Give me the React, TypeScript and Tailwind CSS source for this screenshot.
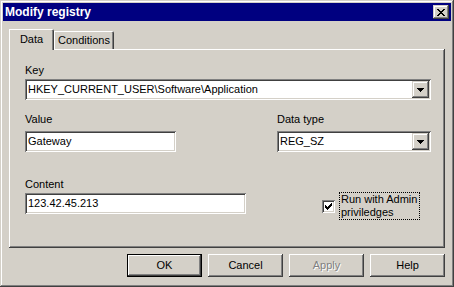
import React from "react"

const raised =
  "shadow-[inset_-1px_-1px_0_#404040,inset_1px_1px_0_#d4d0c8,inset_-2px_-2px_0_#808080,inset_2px_2px_0_#ffffff]"
const pushed =
  "shadow-[inset_-1px_-1px_0_#404040,inset_1px_1px_0_#ffffff,inset_-2px_-2px_0_#808080,inset_2px_2px_0_#d4d0c8]"
const sunken =
  "shadow-[inset_1px_1px_0_#808080,inset_-1px_-1px_0_#ffffff,inset_2px_2px_0_#404040,inset_-2px_-2px_0_#d4d0c8]"

function Pixels({ rows, w, h }: { rows: string[]; w: number; h: number }) {
  return (
    <svg width={w} height={h} viewBox={`0 0 ${w} ${h}`} shapeRendering="crispEdges">
      {rows.map((row, y) =>
        row.split("").map((c, x) => (c === "X" ? <rect key={`${x}-${y}`} x={x} y={y} width={1} height={1} fill="#000" /> : null))
      )}
    </svg>
  )
}

const closeGlyph = ["XX....XX", ".XX..XX.", "..XXXX..", "...XX...", "..XXXX..", ".XX..XX.", "XX....XX"]
const arrowGlyph = ["XXXXXXX", ".XXXXX.", "..XXX..", "...X..."]
const checkGlyph = ["......X", ".....XX", "X...XXX", "XX.XXX.", "XXXXX..", ".XXX...", "..X...."]

function DropButton() {
  return (
    <div className={`w-[17px] h-[17px] bg-[#d4d0c8] flex items-center justify-center ${raised}`}>
      <Pixels rows={arrowGlyph} w={7} h={4} />
    </div>
  )
}

function Combo({ value, width }: { value: string; width: string }) {
  return (
    <div className={`${width} h-[21px] bg-white flex items-center p-[2px] ${sunken}`}>
      <span className="flex-1 pl-[1px] leading-[13px]">{value}</span>
      <DropButton />
    </div>
  )
}

function Field({ value, width }: { value: string; width: string }) {
  return (
    <div className={`${width} h-[21px] bg-white flex items-center pl-[3px] ${sunken}`}>
      <span className="leading-[13px]">{value}</span>
    </div>
  )
}

function Button({ label, isDefault, disabled }: { label: string; isDefault?: boolean; disabled?: boolean }) {
  const inner = (
    <div
      className={`flex-1 h-full flex items-center justify-center bg-[#d4d0c8] ${pushed} ${
        disabled ? "text-[#808080] [text-shadow:1px_1px_0_#ffffff]" : "text-black"
      }`}
    >
      {label}
    </div>
  )
  return (
    <div className={`w-[75px] h-[23px] flex ${isDefault ? "border border-black" : ""}`}>{inner}</div>
  )
}

export default function App() {
  return (
    <div
      className={`w-[454px] h-[287px] bg-[#d4d0c8] p-[3px] flex flex-col text-[11px] text-black font-['Liberation_Sans',Arial,sans-serif] ${raised}`}
    >
      <div className="h-[18px] bg-[#000080] flex items-center justify-between pl-[2px] pr-[2px]">
        <span className="text-white font-bold text-[12px] leading-none">Modify registry</span>
        <div className={`w-[16px] h-[14px] bg-[#d4d0c8] flex items-center justify-center ${raised}`}>
          <Pixels rows={closeGlyph} w={8} h={7} />
        </div>
      </div>

      <div className="flex-1 flex flex-col px-[6px]">
        <div className="mt-[8px] h-[20px] flex items-end">
          <div className="relative z-10 -mb-[1px] w-[45px] h-[21px] bg-[#d4d0c8] rounded-tr-[2px] shadow-[inset_1px_1px_0_#ffffff,inset_-1px_0_0_#404040,inset_-2px_0_0_#808080] flex justify-center pt-[4px]">
            <span className="leading-[13px]">Data</span>
          </div>
          <div className="w-[60px] h-[18px] rounded-tr-[2px] shadow-[inset_1px_1px_0_#ffffff,inset_-1px_0_0_#404040,inset_-2px_0_0_#808080] flex justify-center pt-[3px]">
            <span className="leading-[13px]">Conditions</span>
          </div>
        </div>

        <div className="w-[436px] h-[199px] shadow-[inset_-1px_-1px_0_#404040,inset_1px_1px_0_#ffffff,inset_-2px_-2px_0_#808080] pl-[16px] pt-[15px] flex flex-col">
          <span className="leading-[13px]">Key</span>
          <div className="mt-[2px]">
            <Combo value="HKEY_CURRENT_USER\Software\Application" width="w-[406px]" />
          </div>

          <div className="mt-[13px] flex">
            <div className="w-[252px] flex flex-col">
              <span className="leading-[13px]">Value</span>
              <div className="mt-[5px]">
                <Field value="Gateway" width="w-[151px]" />
              </div>
            </div>
            <div className="flex flex-col">
              <span className="leading-[13px]">Data type</span>
              <div className="mt-[5px]">
                <Combo value="REG_SZ" width="w-[154px]" />
              </div>
            </div>
          </div>

          <div className="mt-[26px] flex">
            <div className="w-[297px] shrink-0 flex flex-col">
              <span className="leading-[13px]">Content</span>
              <div className="mt-[2px]">
                <Field value="123.42.45.213" width="w-[221px]" />
              </div>
            </div>
            <div className="mt-[14px] shrink-0 flex items-center gap-[4px]">
              <div className={`w-[13px] h-[13px] bg-white flex items-center justify-center ${sunken}`}>
                <Pixels rows={checkGlyph} w={7} h={7} />
              </div>
              <div className="shrink-0 whitespace-nowrap border border-dotted border-black pl-[1px] pr-[2px] leading-[13px]">
                Run with Admin
                <br />
                priviledges
              </div>
            </div>
          </div>
        </div>

        <div className="mt-[6px] flex justify-end gap-[6px]">
          <Button label="OK" isDefault />
          <Button label="Cancel" />
          <Button label="Apply" disabled />
          <Button label="Help" />
        </div>
      </div>
    </div>
  )
}
